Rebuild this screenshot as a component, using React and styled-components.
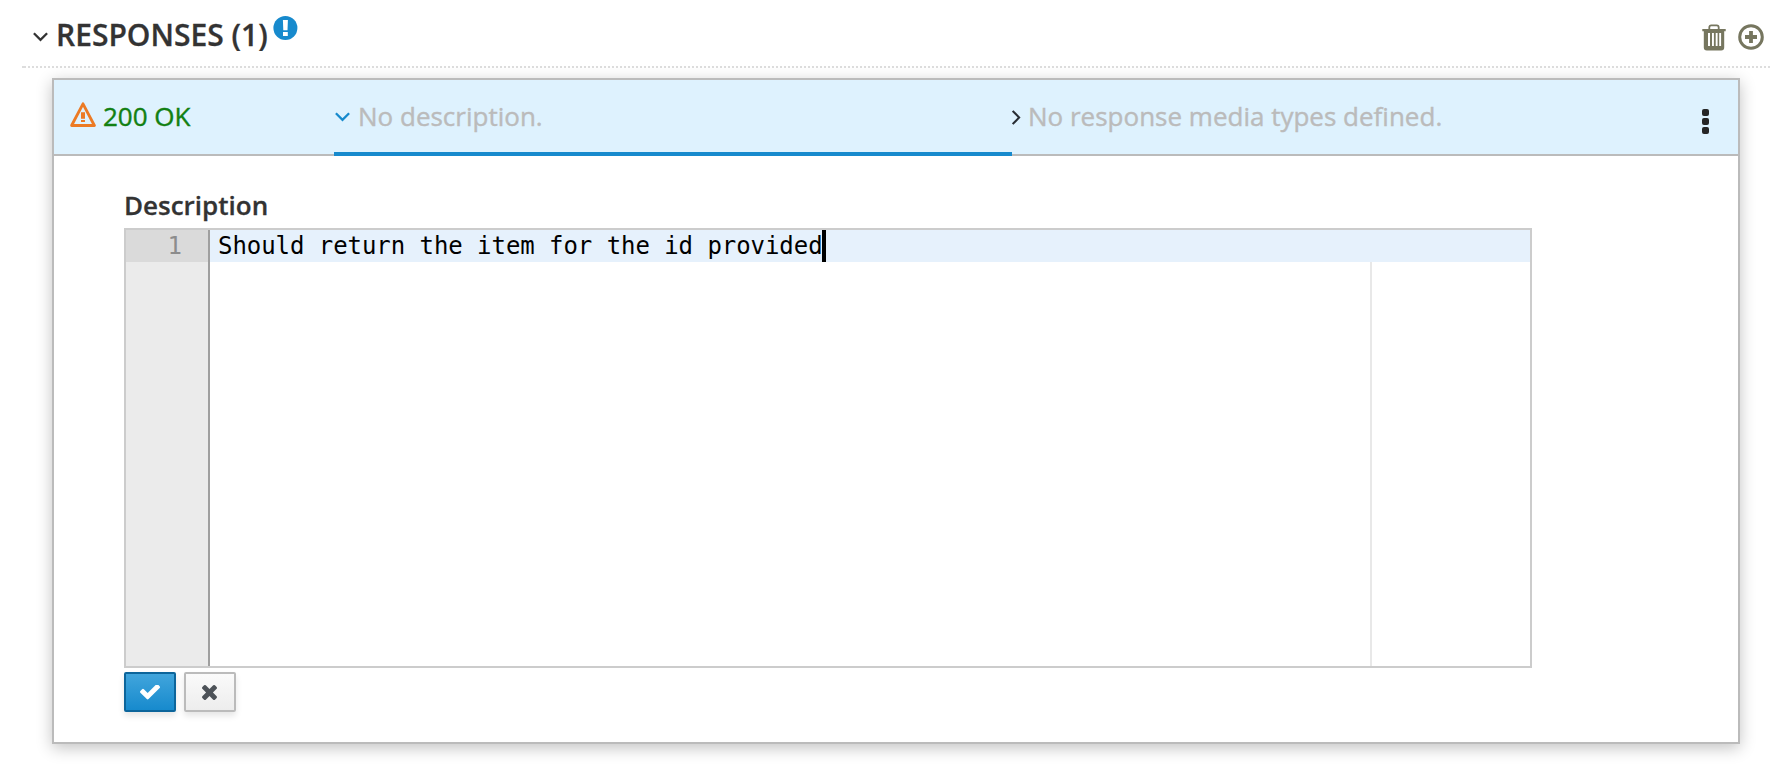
import React from "react";
import styled, { createGlobalStyle } from "styled-components";

const BLUE = "#178acd";

const GlobalStyle = createGlobalStyle`
  * { box-sizing: border-box; }
  body {
    margin: 0;
    background: #fff;
    font-family: "Open Sans", sans-serif;
    font-size: 26px;
    color: #333;
  }
  svg { display: block; flex: none; }
`;

const Page = styled.main`
  height: 774px;
  padding: 0 18px 0 22px;
  overflow: hidden;
`;

const SectionHeader = styled.header`
  display: flex;
  align-items: flex-start;
  height: 68px;
  padding: 0 6px 0 11px;
  background:
    linear-gradient(#ddd, #ddd) 0 100% / 4px 2px no-repeat,
    repeating-linear-gradient(90deg, transparent 0 2px, #ddd 2px 4px) 0 100% / 100% 2px no-repeat;
`;

const SectionTitle = styled.h2`
  margin: 15px 5px 0 8px;
  font-size: 30px;
  line-height: 40px;
  font-weight: 600;
  -webkit-text-stroke: 0.3px currentColor;
  white-space: nowrap;
`;

const Glyph = styled.svg`
  margin-top: ${(p) => p.$top || 0}px;
`;

const HeaderActions = styled.div`
  display: flex;
  gap: 12px;
  margin: 23px 0 0 auto;
  color: #76765f;
`;

const Panel = styled.section`
  width: 1688px;
  height: 666px;
  margin: 10px 0 0 30px;
  border: 2px solid #bbb;
  background: #fff;
  box-shadow: 0 4px 15px rgba(0, 0, 0, 0.24);
`;

const ResponseRow = styled.div`
  display: flex;
  height: 76px;
  background: linear-gradient(#bbb, #bbb) 0 100% / 100% 2px no-repeat #def2fe;
`;

const Cell = styled.div`
  display: flex;
  width: ${(p) => p.$width};
  flex: ${(p) => (p.$width ? "none" : "1")};
  padding-left: ${(p) => p.$pad || 0}px;
  border-bottom: 4px solid ${(p) => (p.$active ? BLUE : "transparent")};
  line-height: 36px;
  white-space: nowrap;
`;

const CellText = styled.span`
  margin: 18px 0 0 ${(p) => p.$gap}px;
  color: ${(p) => (p.$status ? "#128012" : "#bbb")};
  -webkit-text-stroke: 0.4px currentColor;
`;

const KebabMenu = styled.div`
  display: flex;
  flex-direction: column;
  gap: 2px;
  padding: 29px 29px 0 0;
`;

const KebabDot = styled.i`
  width: 7px;
  height: 7px;
  border-radius: 2px;
  background: #262626;
`;

const Form = styled.div`
  padding: 32px 206px 0 70px;
`;

const Label = styled.label`
  display: block;
  height: 40px;
  line-height: 35px;
  font-weight: 600;
  -webkit-text-stroke: 0.3px currentColor;
`;

const Editor = styled.div`
  display: flex;
  height: 440px;
  border: 2px solid #ccc;
  font-family: "DejaVu Sans Mono", monospace;
  font-size: 24px;
  line-height: 32px;
`;

const Gutter = styled.div`
  width: 84px;
  border-right: 2px solid #9f9f9f;
  background: #ebebeb;
`;

const LineNumber = styled.div`
  height: 32px;
  padding-right: 26px;
  background: #dadada;
  color: #8c8c8c;
  text-align: right;
`;

const CodeArea = styled.div`
  flex: 1;
  background: linear-gradient(#e8e8e8, #e8e8e8) 1160px 0 / 2px 100% no-repeat;
`;

const ActiveLine = styled.div`
  display: flex;
  height: 32px;
  padding-left: 8px;
  background: #e6f1fc;
  color: #000;
`;

const Code = styled.span`
  width: 604px;
  letter-spacing: -0.055px;
  white-space: pre;
`;

const Caret = styled.i`
  width: 4px;
  background: #000;
`;

const ButtonBar = styled.div`
  display: flex;
  gap: 8px;
  padding-top: 4px;
`;

const Button = styled.button`
  display: flex;
  align-items: center;
  justify-content: center;
  width: 52px;
  height: 40px;
  padding: 0 ${(p) => (p.$primary ? 0 : 2)}px 0 0;
  border: 2px solid ${(p) => (p.$primary ? "#0c659b" : "#bbb")};
  border-radius: 2px;
  background: ${(p) =>
    p.$primary ? `linear-gradient(#41a5dc, ${BLUE})` : "linear-gradient(#fafafa, #ededed)"};
  box-shadow: 0 4px 6px rgba(3, 3, 3, 0.1);
  color: ${(p) => (p.$primary ? "#fff" : "#4d5258")};
`;

const AngleDown = ({ color, top }) => (
  <Glyph $top={top} width="15" height="10" viewBox="0 0 15 10" fill="none" stroke={color} strokeWidth="2.3">
    <path d="M.9 1.3 7.5 7.9 14.1 1.3" />
  </Glyph>
);

const AngleRight = ({ top }) => (
  <Glyph $top={top} width="9" height="15" viewBox="0 0 9 15" fill="none" stroke="#292e34" strokeWidth="2.1">
    <path d="M.7 .9 7.1 7.5 .7 14.1" />
  </Glyph>
);

const InfoIcon = () => (
  <Glyph $top={16} width="25" height="24" viewBox="0 0 25 24">
    <circle cx="12.4" cy="12" r="12" fill={BLUE} />
    <path fill="#fff" d="M9.9 4h5l-.4 10.2h-4.2zM10 16h4.8v4H10z" />
  </Glyph>
);

const WarningIcon = () => (
  <Glyph $top={22} width="26" height="26" viewBox="0 0 26 26">
    <path d="M13 1.8 24.4 23.5H1.6z" fill="none" stroke="#ec7a24" strokeWidth="2.8" strokeLinejoin="round" />
    <path d="M11 10.3h4v6.4h-4zM11 18h4v2h-4z" fill="#ec7a24" />
  </Glyph>
);

const TrashIcon = () => (
  <svg width="24" height="28" viewBox="0 0 24 28">
    <path d="M7.3 6V4.4q0-2 2-2h5.4q2 0 2 2V6" fill="none" stroke="currentColor" strokeWidth="1.8" />
    <path
      fill="currentColor"
      fillRule="evenodd"
      d="M.3 6h23.4v2.2h-1.5v16.2q0 3-3 3H4.8q-3 0-3-3V8.2H.3zM6 10v13h2V10zM10 10v13h1.9V10zM13.7 10v13h1.9V10zM17.2 10v13h1.9V10z"
    />
  </svg>
);

const AddIcon = () => (
  <Glyph $top={1} width="26" height="26" viewBox="0 0 26 26">
    <circle cx="13" cy="13" r="11.3" fill="none" stroke="currentColor" strokeWidth="3" />
    <path d="M13 7v12M7 13h12" fill="none" stroke="currentColor" strokeWidth="3.8" />
  </Glyph>
);

const CheckIcon = () => (
  <svg width="20" height="15" viewBox="121 442 1550 1080" fill="currentColor">
    <path d="M1671 566q0 40-28 68l-724 724-136 136q-28 28-68 28t-68-28l-136-136-362-362q-28-28-28-68t28-68l136-136q28-28 68-28t68 28l294 295 656-657q28-28 68-28t68 28l136 136q28 28 28 68z" />
  </svg>
);

const TimesIcon = () => (
  <svg width="15" height="15" viewBox="302 366 1188 1188" fill="currentColor">
    <path d="M1490 1322q0 40-28 68l-136 136q-28 28-68 28t-68-28l-294-294-294 294q-28 28-68 28t-68-28l-136-136q-28-28-28-68t28-68l294-294-294-294q-28-28-28-68t28-68l136-136q28-28 68-28t68 28l294 294 294-294q28-28 68-28t68 28l136 136q28 28 28 68t-28 68l-294 294 294 294q28 28 28 68z" />
  </svg>
);

export default function App() {
  return (
    <>
      <GlobalStyle />
      <Page>
        <SectionHeader>
          <AngleDown color="#333" top={32} />
          <SectionTitle>RESPONSES (1)</SectionTitle>
          <InfoIcon />
          <HeaderActions>
            <TrashIcon />
            <AddIcon />
          </HeaderActions>
        </SectionHeader>
        <Panel>
          <ResponseRow>
            <Cell $width="280px" $pad={16}>
              <WarningIcon />
              <CellText $status $gap={7}>200 OK</CellText>
            </Cell>
            <Cell $width="678px" $pad={1} $active>
              <AngleDown color={BLUE} top={32} />
              <CellText $gap={8}>No description.</CellText>
            </Cell>
            <Cell>
              <AngleRight top={30} />
              <CellText $gap={7}>No response media types defined.</CellText>
            </Cell>
            <KebabMenu>
              <KebabDot />
              <KebabDot />
              <KebabDot />
            </KebabMenu>
          </ResponseRow>
          <Form>
            <Label>Description</Label>
            <Editor>
              <Gutter>
                <LineNumber>1</LineNumber>
              </Gutter>
              <CodeArea>
                <ActiveLine>
                  <Code>Should return the item for the id provided</Code>
                  <Caret />
                </ActiveLine>
              </CodeArea>
            </Editor>
            <ButtonBar>
              <Button $primary aria-label="Save">
                <CheckIcon />
              </Button>
              <Button aria-label="Cancel">
                <TimesIcon />
              </Button>
            </ButtonBar>
          </Form>
        </Panel>
      </Page>
    </>
  );
}
